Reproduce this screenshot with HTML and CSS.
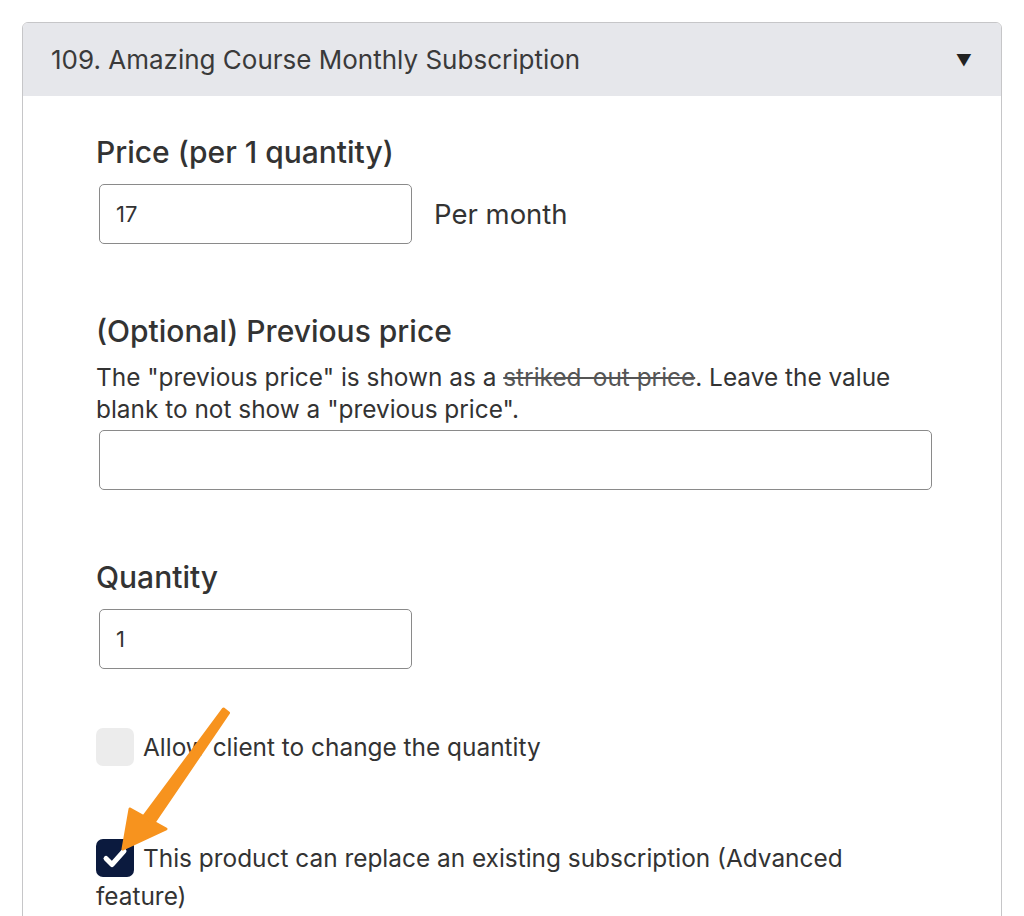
FILE: index.html
```html
<!DOCTYPE html>
<html lang="en">
<head>
  <meta charset="UTF-8">
  <title>Product</title>
  <link rel="stylesheet" href="styles.css">
</head>
<body>
  <div class="product-card">
    <div class="product-header">
      <span class="product-title">109. Amazing Course Monthly Subscription</span>
      <span class="toggle">&#9660;</span>
    </div>

    <div class="product-body">
      <!-- Price -->
      <div class="field">
        <label class="field-label">Price (per 1 quantity)</label>
        <div class="price-row">
          <input type="text" class="text-input short" value="17">
          <span class="period">Per month</span>
        </div>
      </div>

      <!-- Previous price -->
      <div class="field">
        <label class="field-label">(Optional) Previous price</label>
        <p class="help">The "previous price" is shown as a <s>striked-out price</s>. Leave the value blank to not show a "previous price".</p>
        <input type="text" class="text-input wide" value="">
      </div>

      <!-- Quantity -->
      <div class="field">
        <label class="field-label">Quantity</label>
        <input type="text" class="text-input short" value="1">
      </div>

      <div class="check-row first">
        <span class="checkbox"></span>Allow client to change the quantity
      </div>

      <div class="check-row">
        <span class="checkbox checked">
          <svg width="38" height="38" viewBox="0 0 38 38"><path d="M10 19.5 L16 25.5 L28 12" fill="none" stroke="#fff" stroke-width="5" stroke-linecap="round" stroke-linejoin="round"/></svg>
        </span>This product can replace an existing subscription (Advanced feature)
      </div>
    </div>
  </div>

  <!-- annotation arrow drawn over the form -->
  <svg class="arrow" width="1024" height="916" viewBox="0 0 1024 916">
    <g fill="#f7931e" stroke="#f7931e" stroke-width="3" stroke-linejoin="round">
      <polygon points="228.5,713 223.5,709 143,817.5 153,824"/>
      <polygon points="130,809 166,829 123,849"/>
    </g>
  </svg>
</body>
</html>
```

FILE: styles.css
```css
body {
  margin: 0;
  padding: 0;
  background-color: #fff;
  color: #333;
  font-family: Inter, "Noto Sans", sans-serif;
  height: 916px;
  overflow: hidden;
}

.product-card {
  margin: 22px 0 0 22px;
  width: 978px;
  height: 1000px;
  border: 1px solid #c6c6c8;
  border-radius: 6px;
  overflow: hidden;
}

.product-header {
  display: flex;
  justify-content: space-between;
  align-items: center;
  height: 73px;
  padding: 0 29px 0 28px;
  background-color: #e6e7eb;
  font-size: 26px;
  color: #3a3a3a;
}

.toggle {
  font-size: 16px;
  color: #222;
}

.product-body {
  padding: 38px 0 0 73px;
}

.field {
  margin-bottom: 69px;
}

.field-label {
  display: block;
  font-size: 30px;
  line-height: 36px;
  font-weight: 500;
  margin-bottom: 14px;
}

.price-row {
  display: flex;
  align-items: center;
  gap: 22px;
}

.period {
  font-size: 27.5px;
}

.help {
  margin: -2px 0 5px 0;
  font-size: 24.4px;
  line-height: 32px;
  width: 820px;
}

.help s {
  color: #555;
}

.text-input {
  display: block;
  box-sizing: border-box;
  height: 60px;
  margin-left: 3px;
  padding: 0 16px;
  border: 1px solid #8a8a8a;
  border-radius: 5px;
  font-family: inherit;
  font-size: 22px;
  color: #333;
  background: #fff;
}

.text-input.short {
  width: 313px;
}

.text-input.wide {
  width: 833px;
}

.check-row {
  font-size: 24.4px;
  line-height: 38px;
  width: 790px;
  margin-top: 73px;
}

.check-row.first {
  margin-top: -10px;
}

.checkbox {
  display: inline-block;
  vertical-align: top;
  width: 38px;
  height: 38px;
  margin-right: 9px;
  border-radius: 7px;
  background-color: #ececec;
}

.checkbox.checked {
  background-color: #0b1a3e;
}

.checkbox svg {
  display: block;
}

.arrow {
  position: absolute;
  top: 0;
  left: 0;
  pointer-events: none;
}
```
